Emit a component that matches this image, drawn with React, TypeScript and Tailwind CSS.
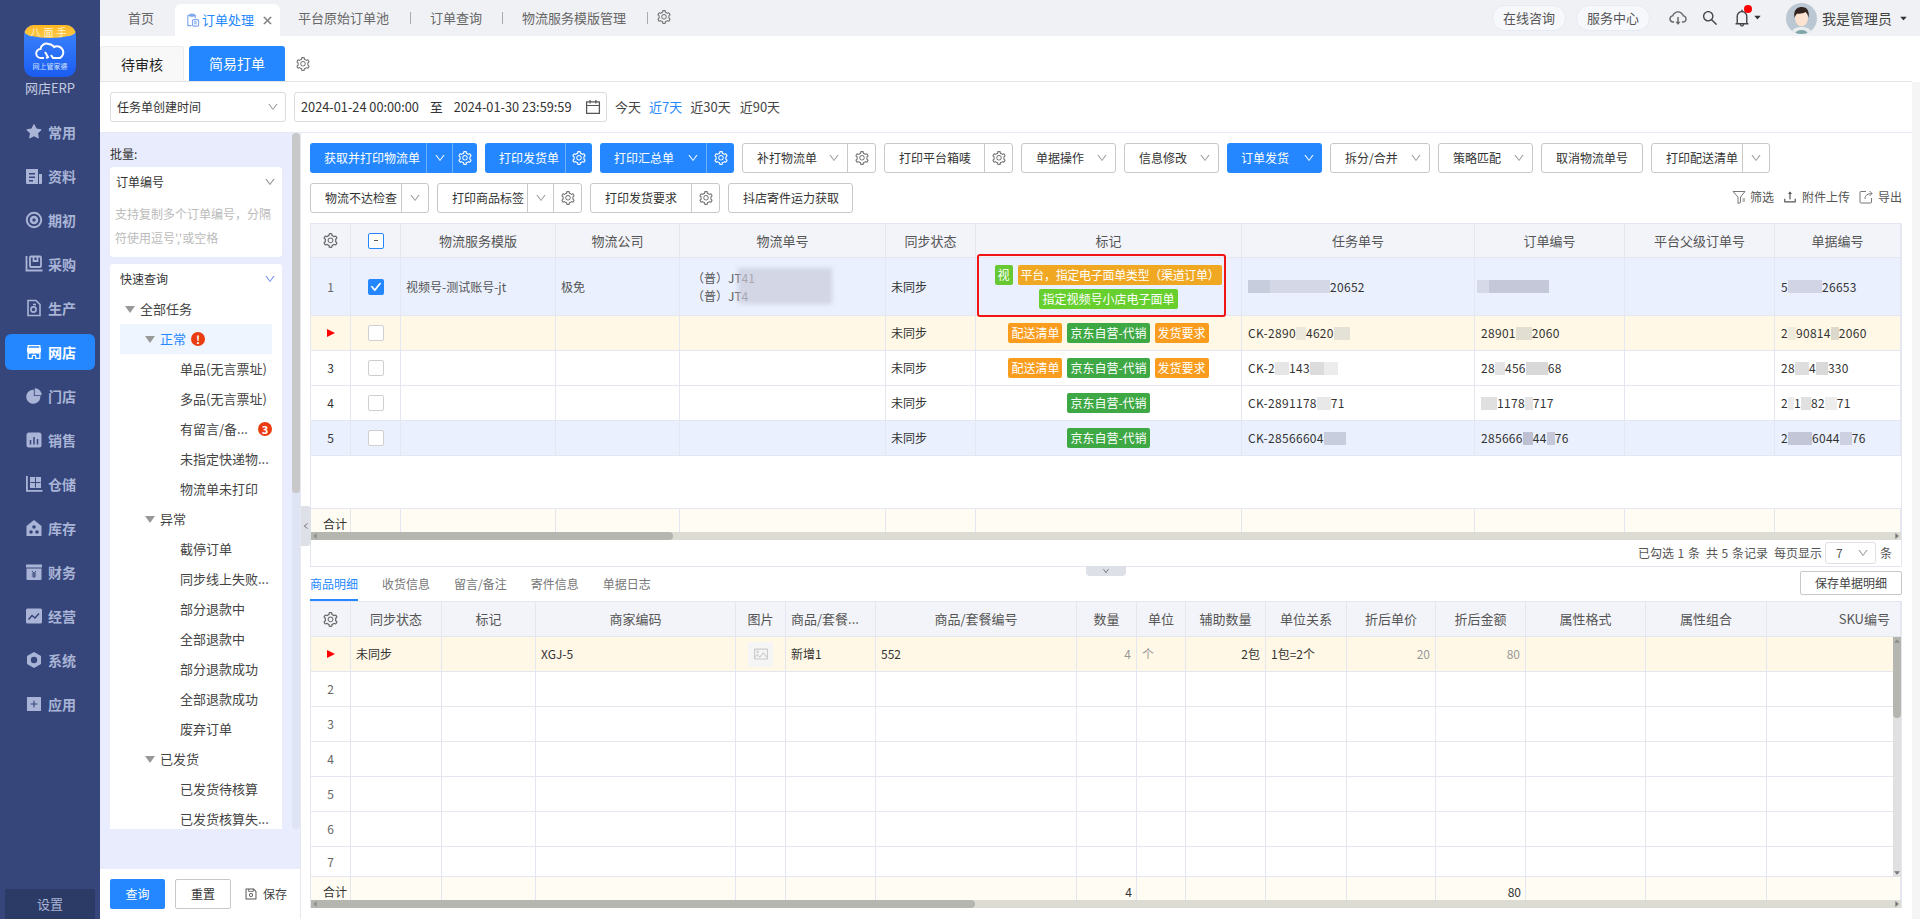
import React from "react";
import {
  AiOutlineSetting, AiOutlineDown, AiOutlineCalendar, AiOutlineUpload, AiOutlineCloudDownload,
  AiOutlineSearch, AiOutlineBell, AiOutlineClose, AiOutlinePicture, AiOutlineSave, AiFillStar,
  AiFillPieChart, AiFillShop, AiFillPlusSquare, AiOutlineCheck, AiFillCaretDown, AiOutlineLeft, AiFillCaretLeft, AiFillCaretRight, AiFillCaretUp,
} from "react-icons/ai";

const navIcon = "w-[18px] h-[18px] shrink-0";
const Doc = () => (<svg viewBox="0 0 18 18" className={navIcon} fill="currentColor"><path d="M1 2h12v15H2a1 1 0 0 1-1-1zM14 7h3v9a1 1 0 0 1-1 1h-2z" /><path d="M4 6h6v1.6H4zM4 9.5h6v1.6H4zM4 13h4v1.6H4z" fill="#36467a" /></svg>);
const Target = () => (<svg viewBox="0 0 18 18" className={navIcon} fill="none" stroke="currentColor"><circle cx="9" cy="9" r="7.2" strokeWidth="2" /><circle cx="9" cy="9" r="3" strokeWidth="2.6" /></svg>);
const Buy = () => (<svg viewBox="0 0 18 18" className={navIcon} fill="none" stroke="currentColor" strokeWidth="1.8"><path d="M1.5 1v14.5h16" /><rect x="5" y="1.5" width="11" height="10.5" rx="1" /><path d="M8.5 2v4h4V2" /></svg>);
const Prod = () => (<svg viewBox="0 0 18 18" className={navIcon} fill="none" stroke="currentColor" strokeWidth="1.6"><path d="M3 1.5h8l4 4v11H3z" /><circle cx="8.5" cy="10.5" r="2.6" /><path d="M8 5.5h3" /></svg>);
const Bars = () => (<svg viewBox="0 0 18 18" className={navIcon}><rect x="1.5" y="1.5" width="15" height="15" rx="2.5" fill="currentColor" /><path d="M5.5 9v4.5M9 6v7.5M12.5 8v5.5" stroke="#36467a" strokeWidth="1.5" /></svg>);
const Wh = () => (<svg viewBox="0 0 18 18" className={navIcon} fill="currentColor"><path d="M1 1h1.8v14H17.5v1.8H1z" /><path d="M5 2h11v11H5z" /><path d="M10 2.5h1v10h-1zM5.5 7h10v1h-10z" fill="#36467a" /></svg>);
const Stock = () => (<svg viewBox="0 0 18 18" className={navIcon} fill="currentColor"><path d="M9 1 1.5 7v10h15V7z" /><circle cx="9" cy="8" r="1.8" fill="#36467a" /><circle cx="6" cy="13" r="1.8" fill="#36467a" /><circle cx="12" cy="13" r="1.8" fill="#36467a" /></svg>);
const Money = () => (<svg viewBox="0 0 18 18" className={navIcon} fill="currentColor"><rect x="1" y="1.5" width="16" height="3" rx=".6" /><path d="M1.5 5.5h15V16a1 1 0 0 1-1 1h-13a1 1 0 0 1-1-1z" /><path d="M7 8l2 2.4L11 8M6.8 11h4.4M6.8 13h4.4M9 10.4V15" stroke="#36467a" strokeWidth="1" fill="none" /></svg>);
const Biz = () => (<svg viewBox="0 0 18 18" className={navIcon} fill="currentColor"><rect x="1" y="1.5" width="16" height="15" rx="1.5" /><path d="M3.5 12.5 7 8.5l3 2.5 4-4.5" stroke="#36467a" strokeWidth="1.5" fill="none" /></svg>);
const Hex = () => (<svg viewBox="0 0 18 18" className={navIcon}><path d="M9 1 16 5v8l-7 4-7-4V5z" fill="currentColor" /><circle cx="9" cy="9" r="3.2" fill="#36467a" /></svg>);

const navItems: [string, React.ReactNode][] = [
  ["常用", <AiFillStar className={navIcon} />], ["资料", <Doc />], ["期初", <Target />], ["采购", <Buy />], ["生产", <Prod />],
  ["网店", <AiFillShop className={navIcon} />], ["门店", <AiFillPieChart className={navIcon} />], ["销售", <Bars />], ["仓储", <Wh />], ["库存", <Stock />],
  ["财务", <Money />], ["经营", <Biz />], ["系统", <Hex />], ["应用", <AiFillPlusSquare className={navIcon} />],
];

const Logo = () => (
  <div className="relative w-[52px] h-[52px] rounded-[10px] overflow-hidden bg-gradient-to-b from-[#3f86ff] to-[#1a5cf0]">
    <div className="h-[13px] rounded-b-[50%] bg-gradient-to-b from-[#ffb81f] to-[#ffc94a] text-[10px] leading-[13px] text-center text-[#fff3cf] tracking-[3px]">八面手</div>
    <svg viewBox="0 0 30 18" className="w-[30px] h-[18px] mx-auto mt-[4px]" fill="none" stroke="#fff" strokeWidth="2"><path d="M9 16H6a4.5 4.5 0 0 1-.5-9 6 6 0 0 1 8-5 7 7 0 0 1 5.500 3 5.500 5.500 0 1 1 6 11h-7l-2-3" /><path d="M10 10l3 5-2 1" /></svg>
    <div className="text-[7px] leading-[10px] mt-[1px] text-center text-[#cfe0ff] whitespace-nowrap">网上管家婆</div>
  </div>
);

const Sidebar = () => (
  <aside className="w-[100px] shrink-0 h-full bg-[#36467a] flex flex-col">
    <div className="mt-[25px] flex justify-center"><Logo /></div>
    <div className="h-[20px] mt-[1px] text-center text-[13px] leading-[20px] text-[#c3cbe0]">网店ERP</div>
    <div className="mt-[12px] flex flex-col">
      {navItems.map(([t, ic]) => (
        <div key={t} className="h-[44px] flex items-center justify-center">
          <div className={"w-[90px] h-[36px] rounded-[6px] flex items-center pl-[20px] gap-[5px] text-[14px] font-bold " + (t === "网店" ? "bg-[#2487ff] text-white" : "text-[#a9b4d6]")}>
            {ic}<span>{t}</span>
          </div>
        </div>
      ))}
    </div>
    <div className="mt-auto mx-[5px] h-[30px] rounded-t-[3px] bg-[#2c3a66] text-[13px] leading-[30px] text-center text-[#a9b4d6]">设置</div>
  </aside>
);

const Sep = ({ ml }: { ml: string }) => <span className={"w-px h-[12px] bg-[#aaa] " + ml} />;

const TopBar = () => (
  <div className="h-[36px] shrink-0 bg-[#f0f1f5] flex items-center text-[13px] text-[#666] pr-[12px]">
    <span className="ml-[28px] w-[26px]">首页</span>
    <div className="ml-[21px] w-[105px] h-[32px] self-end rounded-t-[6px] bg-white flex items-center pl-[10px] text-[#2487ff]">
      <svg viewBox="0 0 16 16" className="w-[15px] h-[15px] shrink-0 mr-[2px]" fill="none" stroke="#7fa6ee" strokeWidth="1.2"><path d="M3 2.500h8v3M3 2.500v11h4M5.500 1.500h4v2h-4z" /><rect x="8" y="7" width="6.500" height="7" rx="1.500" /><path d="M9.500 9.500h3M9.500 11.500h3" /></svg>
      <span>订单处理</span>
      <AiOutlineClose className="ml-[8px] w-[11px] h-[11px] text-[#777]" strokeWidth={60} />
    </div>
    <span className="ml-[18px]">平台原始订单池</span>
    <Sep ml="ml-[21px]" />
    <span className="ml-[19px]">订单查询</span>
    <Sep ml="ml-[20px]" />
    <span className="ml-[19px]">物流服务模版管理</span>
    <Sep ml="ml-[21px]" />
    <AiOutlineSetting className="ml-[8px] w-[16px] h-[16px] text-[#777] -mt-[2px]" />
    <div className="ml-auto flex items-center">
      <span className="w-[74px] h-[26px] rounded-full bg-[#f7f8fc] border border-[#e8eaf4] text-center leading-[24px] text-[#555]">在线咨询</span>
      <span className="ml-[10px] w-[74px] h-[26px] rounded-full bg-[#f7f8fc] border border-[#e8eaf4] text-center leading-[24px] text-[#555]">服务中心</span>
      <AiOutlineCloudDownload className="ml-[18px] w-[20px] h-[20px] text-[#666]" />
      <AiOutlineSearch className="ml-[13px] w-[18px] h-[18px] text-[#444]" />
      <div className="relative ml-[13px] flex items-center">
        <AiOutlineBell className="w-[20px] h-[20px] text-[#444]" />
        <span className="absolute -top-[3px] left-[12px] w-[8px] h-[8px] rounded-full bg-[#ff0000]" />
        <AiFillCaretDown className="ml-[1px] w-[9px] h-[9px] text-[#333] -mt-[2px]" />
      </div>
      <svg viewBox="0 0 31 31" className="ml-[24px] w-[31px] h-[31px] rounded-full">
        <rect width="31" height="31" fill="#bcc7d4" />
        <path d="M5 31c1-6 6-7 10.500-7S25 25 26 31z" fill="#e8eef0" />
        <path d="M9 31c1-3 3-4 6.500-4S21 28 22 31z" fill="#7fa5a8" />
        <ellipse cx="15.500" cy="15" rx="6.500" ry="8.500" fill="#fbe3d0" />
        <path d="M8.500 15C7 6 12 4 16 4s8 3 6.500 11c-.5-3-1.500-5-3-6-2 1.500-6 2-8 1.500-1.500 1-2.500 2.500-3 4.500z" fill="#32241f" />
      </svg>
      <span className="ml-[5px] text-[14px] text-[#444]">我是管理员</span>
      <AiFillCaretDown className="ml-[7px] w-[9px] h-[9px] text-[#333]" />
    </div>
  </div>
);

const Tabs = () => (
  <div className="h-[46px] shrink-0 pt-[10px] flex items-stretch border-b border-[#e4e4e4] mr-[8px] text-[14px]">
    <div className="w-[84px] h-[35px] bg-[#f8f8f8] border border-b-0 border-[#ececec] rounded-t-[3px] flex items-center justify-center text-[#222]">待审核</div>
    <div className="ml-[5px] w-[96px] h-[35px] bg-[#2487ff] rounded-t-[3px] flex items-center justify-center text-white">简易打单</div>
    <AiOutlineSetting className="ml-[10px] mt-[10px] w-[16px] h-[16px] text-[#777]" />
  </div>
);

const Filter = () => (
  <div className="h-[51px] shrink-0 pl-[10px] pt-[10px] flex items-start border-b border-[#e6e8f6] text-[#333]">
    <div className="w-[176px] h-[30px] rounded-[3px] border border-[#dcdcdc] flex items-center justify-between pl-[6px] pr-[6px] text-[12px]">
      <span>任务单创建时间</span><AiOutlineDown className="w-[12px] h-[12px] text-[#999]" />
    </div>
    <div className="ml-[8px] w-[313px] h-[30px] rounded-[3px] border border-[#dcdcdc] flex items-center pl-[6px] pr-[4px] text-[12.75px] whitespace-nowrap">
      <span>2024-01-24 00:00:00</span><span className="ml-[11px]">至</span><span className="ml-[11px]">2024-01-30 23:59:59</span>
      <AiOutlineCalendar className="ml-auto w-[18px] h-[18px] text-[#555]" />
    </div>
    <div className="ml-[8px] h-[30px] flex items-center gap-[8px] text-[13px] text-[#444]">
      <span>今天</span><span className="text-[#2487ff]">近7天</span><span>近30天</span><span className="ml-[1px]">近90天</span>
    </div>
  </div>
);

const Tri = () => (
  <svg viewBox="0 0 10 7" className="w-[10px] h-[7px] shrink-0"><path d="M0 0h10L5 7z" fill="#999" /></svg>
);
const Badge = ({ children }: { children: React.ReactNode }) => (
  <span className="w-[14px] h-[14px] rounded-full bg-[#ea3c10] text-white text-[11px] leading-[14px] text-center font-bold shrink-0">{children}</span>
);

const Leaf = ({ t, badge }: { t: string; badge?: string }) => (
  <div className="h-[30px] pl-[70px] pr-[10px] flex items-center justify-between text-[13px] text-[#444] whitespace-nowrap">
    <span>{t}</span>{badge && <Badge>{badge}</Badge>}
  </div>
);
const Group = ({ t, active, badge, pad = "pl-[30px]" }: { t: string; active?: boolean; badge?: string; pad?: string }) => (
  <div className={"h-[30px] mx-[10px] flex items-center gap-[5px] text-[13px] whitespace-nowrap " + pad + (active ? " bg-[#eef5ff] text-[#2487ff]" : " text-[#444]")}>
    <Tri /><span>{t}</span>{badge && <Badge>{badge}</Badge>}
  </div>
);

const LeftPanel = () => (
  <div className="w-[200px] shrink-0 h-full flex flex-col bg-[#e8ecfc] relative">
    <div className="h-[736px] relative pl-[10px] overflow-hidden">
      <div className="absolute right-0 top-0 w-[8px] h-[696px] rounded-[4px] bg-[#dfe4f5]" />
      <div className="absolute right-0 top-0 w-[8px] h-[360px] rounded-[4px] bg-[#c8c8c8]" />
      <div className="h-[34px] pt-[11px] text-[12px] leading-[20px] text-[#333]">批量:</div>
      <div className="w-[172px] h-[90px] bg-white rounded-[3px]">
        <div className="h-[30px] pl-[6px] pr-[6px] flex items-center justify-between text-[12px] text-[#333]">
          <span>订单编号</span><AiOutlineDown className="w-[12px] h-[12px] text-[#888]" />
        </div>
        <div className="px-[5px] mt-[5px] text-[12px] leading-[24px] text-[#bbb]">支持复制多个订单编号，分隔<br />符使用逗号','或空格</div>
      </div>
      <div className="mt-[7px] w-[172px] h-[565px] bg-white rounded-t-[3px] overflow-hidden">
        <div className="h-[30px] pl-[10px] pr-[6px] flex items-center justify-between text-[12px] text-[#333]">
          <span>快速查询</span><AiOutlineDown className="w-[12px] h-[12px] text-[#6e8cf0]" />
        </div>
        <Group t="全部任务" pad="pl-[5px]" />
        <Group t="正常" active badge="!" pad="pl-[25px]" />
        <Leaf t="单品(无言票址)" />
        <Leaf t="多品(无言票址)" />
        <Leaf t="有留言/备..." badge="3" />
        <Leaf t="未指定快递物..." />
        <Leaf t="物流单未打印" />
        <Group t="异常" pad="pl-[25px]" />
        <Leaf t="截停订单" />
        <Leaf t="同步线上失败..." />
        <Leaf t="部分退款中" />
        <Leaf t="全部退款中" />
        <Leaf t="部分退款成功" />
        <Leaf t="全部退款成功" />
        <Leaf t="废弃订单" />
        <Group t="已发货" pad="pl-[25px]" />
        <Leaf t="已发货待核算" />
        <Leaf t="已发货核算失..." />
      </div>
    </div>
    <div className="h-[50px] bg-white pl-[10px] flex items-center text-[12px]">
      <div className="w-[55px] h-[30px] rounded-[2px] bg-[#2487ff] text-white flex items-center justify-center">查询</div>
      <div className="ml-[10px] w-[56px] h-[30px] rounded-[2px] border border-[#c8c8c8] text-[#333] flex items-center justify-center">重置</div>
      <AiOutlineSave className="ml-[13px] w-[14px] h-[14px] text-[#555]" />
      <span className="ml-[5px] text-[#444]">保存</span>
    </div>
  </div>
);

const Gear = ({ cls = "text-[#777]" }: { cls?: string }) => <AiOutlineSetting className={"w-[16px] h-[16px] " + cls} />;

type SegProps = { w: string; label: string; blue?: boolean; chev?: string; chevInline?: boolean; gear?: string; main?: string };
const SegBtn = ({ w, label, blue, chev, chevInline, gear, main }: SegProps) => {
  const box = blue ? "bg-[#2487ff] text-white" : "bg-white border border-[#c8c8c8] text-[#333]";
  const div = blue ? "border-l border-[#6eb0ff]" : "border-l border-[#c8c8c8]";
  const ic = blue ? "text-white" : "text-[#999]";
  return (
    <div className={"h-[30px] rounded-[3px] flex items-stretch text-[12px] whitespace-nowrap shrink-0 " + w + " " + box}>
      <div className={"flex-1 min-w-0 flex items-center pl-[14px] " + (main ?? "") + (chevInline ? " justify-between pr-[7px]" : "")}>
        <span>{label}</span>
        {chevInline && <AiOutlineDown className={"w-[12px] h-[12px] " + ic} />}
      </div>
      {chev && <div className={"flex items-center justify-center " + chev + " " + div}><AiOutlineDown className={"w-[12px] h-[12px] " + ic} /></div>}
      {gear && <div className={"flex items-center justify-center " + gear + " " + div}><Gear cls={blue ? "text-white" : "text-[#777]"} /></div>}
    </div>
  );
};

const Toolbar = () => (
  <div className="pt-[10px]">
    <div className="flex gap-[8px]">
      <SegBtn w="w-[167px]" label="获取并打印物流单" blue chev="w-[26px]" gear="w-[25px]" />
      <SegBtn w="w-[107px]" label="打印发货单" blue gear="w-[27px]" />
      <SegBtn w="w-[134px]" label="打印汇总单" blue chevInline gear="w-[28px]" />
      <SegBtn w="w-[134px]" label="补打物流单" chevInline gear="w-[28px]" />
      <SegBtn w="w-[129px]" label="打印平台箱唛" gear="w-[28px]" />
      <SegBtn w="w-[95px]" label="单据操作" chevInline />
      <SegBtn w="w-[95px]" label="信息修改" chevInline />
      <SegBtn w="w-[95px]" label="订单发货" blue chevInline />
      <SegBtn w="w-[100px]" label="拆分/合并" chevInline />
      <SegBtn w="w-[95px]" label="策略匹配" chevInline />
      <SegBtn w="w-[102px]" label="取消物流单号" />
      <SegBtn w="w-[119px]" label="打印配送清单" chev="w-[27px]" />
    </div>
    <div className="mt-[10px] flex gap-[8px] items-start relative">
      <SegBtn w="w-[119px]" label="物流不达检查" chev="w-[27px]" />
      <SegBtn w="w-[145px]" label="打印商品标签" chev="w-[26px]" gear="w-[28px]" />
      <SegBtn w="w-[130px]" label="打印发货要求" gear="w-[28px]" />
      <SegBtn w="w-[125px]" label="抖店寄件运力获取" />
      <div className="ml-auto h-[28px] flex items-center text-[12px] text-[#555] whitespace-nowrap">
        <svg viewBox="0 0 14 14" className="w-[14px] h-[14px]" fill="none" stroke="#777" strokeWidth="1"><path d="M1 1.500h12L8.500 7v5.500L6 13.500V7z" /><path d="M10.500 9h2.500M10.500 11h2.500" /></svg>
        <span className="ml-[4px]">筛选</span>
        <AiOutlineUpload className="ml-[8px] w-[16px] h-[16px] text-[#555]" />
        <span className="ml-[4px]">附件上传</span>
        <svg viewBox="0 0 14 14" className="ml-[9px] w-[14px] h-[14px]" fill="none" stroke="#777" strokeWidth="1"><path d="M7 1.500H2a1 1 0 0 0-1 1V12a1 1 0 0 0 1 1h9.500a1 1 0 0 0 1-1V8" /><path d="M6 9c0-4 3-5.500 7-5.500M10.500 1 13 3.500 10.500 6" /></svg>
        <span className="ml-[5px]">导出</span>
      </div>
    </div>
  </div>
);

const topCols = "grid grid-cols-[40px_50px_155px_124px_206px_90px_266px_233px_150px_150px_126px]";
const botCols = "grid grid-cols-[40px_91px_94px_200px_50px_90px_201px_60px_49px_80px_81px_89px_90px_120px_121px_134px]";
const cellB = "border-r border-b border-[#e4e7f0] flex items-center min-w-0 whitespace-nowrap overflow-hidden";

const Cell = ({ c = "", children }: { c?: string; children?: React.ReactNode }) => (
  <div className={cellB + " " + c}>{children}</div>
);
const Box = ({ v }: { v?: "check" | "minus" }) => {
  if (v === "check") return <span className="w-[16px] h-[16px] rounded-[2px] bg-[#2487ff] flex items-center justify-center"><AiOutlineCheck className="w-[12px] h-[12px] text-white" strokeWidth={80} /></span>;
  if (v === "minus") return <span className="w-[16px] h-[16px] rounded-[2px] border border-[#2487ff] bg-white flex items-center justify-center"><span className="w-[4px] h-px bg-[#555]" /></span>;
  return <span className="w-[16px] h-[16px] rounded-[2px] border border-[#cfcfcf] bg-white" />;
};
const Arrow = () => <svg viewBox="0 0 8 8" className="w-[8px] h-[8px]"><path d="M0 0l8 4-8 4z" fill="#f00" /></svg>;
const Tag = ({ c, children }: { c: string; children: React.ReactNode }) => (
  <span className={"h-[20px] px-[3px] rounded-[2px] text-white text-[12px] leading-[20px] whitespace-nowrap " + c}>{children}</span>
);
const M = ({ c }: { c: string }) => <i className={"inline-block h-[13px] align-middle " + c} />;

const headTop = ["物流服务模版", "物流公司", "物流单号", "同步状态", "标记", "任务单号", "订单编号", "平台父级订单号", "单据编号"];

const StdTags = () => (
  <div className="w-full flex justify-center gap-[5px]">
    <Tag c="bg-[#fa9d1e]">配送清单</Tag><Tag c="bg-[#3ea844]">京东自营-代销</Tag><Tag c="bg-[#fa9d1e]">发货要求</Tag>
  </div>
);
const JdTag = () => <div className="w-full flex justify-center"><Tag c="bg-[#3ea844]">京东自营-代销</Tag></div>;

type TopRow = { idx: React.ReactNode; bg: string; tags: React.ReactNode; task: React.ReactNode; order: React.ReactNode; doc: React.ReactNode };
const num = "pl-[6px] tracking-[0.3px] text-[#333]";
const topRows: TopRow[] = [
  {
    idx: <Arrow />, bg: "bg-[#fff8e6]", tags: <StdTags />,
    task: <>CK-2890<M c="w-[10px] bg-[#ece9dc]" />4620<M c="w-[16px] bg-[#e4e1d6]" /></>,
    order: <>28901<M c="w-[16px] bg-[#e2dfd2]" />2060</>,
    doc: <>2<M c="w-[8px] bg-[#eeebdd]" />90814<M c="w-[8px] bg-[#dcd9cc]" />2060</>,
  },
  {
    idx: "3", bg: "bg-white", tags: <StdTags />,
    task: <>CK-2<M c="w-[14px] bg-[#e6e6e6]" />143<M c="w-[14px] bg-[#dcdcdc]" /><M c="w-[14px] bg-[#ececec]" /></>,
    order: <>28<M c="w-[10px] bg-[#e4e4e4]" />456<M c="w-[22px] bg-[#d8d8d8]" />68</>,
    doc: <>28<M c="w-[14px] bg-[#dedede]" />4<M c="w-[12px] bg-[#d9d9d9]" />330</>,
  },
  {
    idx: "4", bg: "bg-white", tags: <JdTag />,
    task: <>CK-2891178<M c="w-[14px] bg-[#e8e8e8]" />71</>,
    order: <><M c="w-[16px] bg-[#e0e0e0]" />1178<M c="w-[8px] bg-[#e4e4e4]" />717</>,
    doc: <>2<M c="w-[6px] bg-[#ececec]" />1<M c="w-[10px] bg-[#e0e0e0]" />82<M c="w-[12px] bg-[#ededed]" />71</>,
  },
  {
    idx: "5", bg: "bg-[#eaf0fe]", tags: <JdTag />,
    task: <>CK-28566604<M c="w-[22px] bg-[#c8cddd]" /></>,
    order: <>285666<M c="w-[10px] bg-[#bcc0d0]" />44<M c="w-[8px] bg-[#c4c8d8]" />76</>,
    doc: <>2<M c="w-[24px] bg-[#c2c6d6]" />6044<M c="w-[12px] bg-[#ccd0e0]" />76</>,
  },
];

const TopTable = () => (
  <div className="relative mt-[10px] h-[344px] border-x border-b border-[#e4e7f0] text-[12px] text-[#333]">
    <div className={topCols + " h-[35px] bg-[#f3f4f9] text-[13px] text-[#555] border-t border-[#e4e7f0]"}>
      <Cell c="justify-center"><AiOutlineSetting className="w-[17px] h-[17px] text-[#666]" /></Cell>
      <Cell c="justify-center"><Box v="minus" /></Cell>
      {headTop.map((h) => <Cell key={h} c="justify-center">{h}</Cell>)}
    </div>
    <div className={topCols + " h-[58px] bg-[#eaf0fe]"}>
      <Cell c="justify-center text-[#666]">1</Cell>
      <Cell c="justify-center"><Box v="check" /></Cell>
      <Cell c="pl-[5px] text-[#555]">视频号-测试账号-jt</Cell>
      <Cell c="pl-[5px] text-[#555]">极免</Cell>
      <Cell c="relative pl-[12px] text-[#555]">
        <div className="leading-[18px]"><div>（普）JT41</div><div>（普）JT4</div></div>
        <span className="absolute left-[58px] top-[10px] w-[94px] h-[36px] bg-[#c9cbda]/70 blur-[2px]" />
      </Cell>
      <Cell c="pl-[5px]">未同步</Cell>
      <Cell c="flex-col justify-center gap-[4px]">
        <div className="flex gap-[5px]"><Tag c="bg-[#67c832]">视</Tag><Tag c="bg-[#f0a822] tracking-[-0.3px]">平台，指定电子面单类型（渠道订单）</Tag></div>
        <Tag c="bg-[#67cf2e]">指定视频号小店电子面单</Tag>
      </Cell>
      <Cell c={num}><M c="w-[22px] bg-[#c8cddd]" /><M c="w-[60px] bg-[#d3d7e6]" />20652</Cell>
      <Cell c="pl-[2px]"><M c="w-[12px] bg-[#d5d9e8]" /><M c="w-[60px] bg-[#c4c8d8]" /></Cell>
      <Cell />
      <Cell c={num}>5<M c="w-[34px] bg-[#d0d4e4]" />26653</Cell>
    </div>
    {topRows.map((r, i) => (
      <div key={i} className={topCols + " h-[35px] " + r.bg}>
        <Cell c="justify-center">{r.idx}</Cell>
        <Cell c="justify-center"><Box /></Cell>
        <Cell /><Cell /><Cell />
        <Cell c="pl-[5px]">未同步</Cell>
        <Cell>{r.tags}</Cell>
        <Cell c={num}>{r.task}</Cell>
        <Cell c={num}>{r.order}</Cell>
        <Cell />
        <Cell c={num}>{r.doc}</Cell>
      </div>
    ))}
    <div className="h-[53px] border-b border-[#e4e7f0]" />
    <div className={topCols + " h-[31px] bg-[#fffcf3]"}>
      <Cell c="pl-[12px] overflow-visible">合计</Cell>
      <Cell /><Cell /><Cell /><Cell /><Cell /><Cell /><Cell /><Cell /><Cell /><Cell />
    </div>
    <HScroll thumb="w-[362px]" cls="top-[309px]" />
    <div className="h-[25px] flex items-center justify-end pr-[9px] text-[12px] text-[#555] whitespace-nowrap [word-spacing:1px]">
      <span>已勾选 1 条</span><span className="ml-[6px]">共 5 条记录</span><span className="ml-[6px]">每页显示</span>
      <div className="ml-[3px] w-[51px] h-[22px] rounded-[3px] border border-[#e0e0e0] flex items-center justify-between pl-[10px] pr-[6px]"><span>7</span><AiOutlineDown className="w-[12px] h-[12px] text-[#999]" /></div>
      <span className="ml-[4px]">条</span>
    </div>
  </div>
);

const HScroll = ({ thumb, cls }: { thumb: string; cls: string }) => (
  <div className={"absolute left-0 right-0 h-[8px] bg-[#dcdcd4] flex items-center " + cls}>
    <div className={"h-[8px] rounded-r-[4px] bg-[#b6b6b0] " + thumb}><AiFillCaretLeft className="w-[8px] h-[8px] text-[#8e8e8a]" /></div>
    <AiFillCaretRight className="ml-auto w-[8px] h-[8px] text-[#777]" />
  </div>
);

const BottomTabs = () => (
  <div className="h-[34px] flex text-[12px] text-[#777] relative">
    <div className="h-[34px] w-[48px] leading-[34px] text-[#2487ff] border-b-2 border-[#2487ff] whitespace-nowrap">商品明细</div>
    <span className="ml-[24px] leading-[34px]">收货信息</span>
    <span className="ml-[24px] leading-[34px]">留言/备注</span>
    <span className="ml-[24px] leading-[34px]">寄件信息</span>
    <span className="ml-[24px] leading-[34px]">单据日志</span>
    <div className="ml-auto mt-[4px] w-[102px] h-[24px] rounded-[2px] border border-[#c8c8c8] text-[#444] flex items-center justify-center">保存单据明细</div>
  </div>
);

const headBot: [string, string][] = [
  ["同步状态", "justify-center"], ["标记", "justify-center"], ["商家编码", "justify-center"], ["图片", "justify-center"], ["商品/套餐...", "pl-[5px]"],
  ["商品/套餐编号", "justify-center"], ["数量", "justify-center"], ["单位", "justify-center"], ["辅助数量", "justify-center"], ["单位关系", "justify-center"],
  ["折后单价", "justify-center"], ["折后金额", "justify-center"], ["属性格式", "justify-center"], ["属性组合", "justify-center"], ["SKU编号", "justify-end pr-[10px]"],
];
const empty15 = Array.from({ length: 15 }, (_, i) => i);

const BottomTable = () => (
  <div className="relative h-[307px] border-x border-b border-[#e4e7f0] text-[12px] text-[#333]">
    <div className={botCols + " h-[36px] bg-[#f3f4f9] text-[13px] text-[#555] border-t border-[#e4e7f0]"}>
      <Cell c="justify-center"><AiOutlineSetting className="w-[17px] h-[17px] text-[#666]" /></Cell>
      {headBot.map(([h, c]) => <Cell key={h} c={c}>{h}</Cell>)}
    </div>
    <div className={botCols + " h-[35px] bg-[#fff8e6]"}>
      <Cell c="justify-center"><Arrow /></Cell>
      <Cell c="pl-[5px]">未同步</Cell>
      <Cell />
      <Cell c="pl-[5px]">XGJ-5</Cell>
      <Cell c="justify-center"><span className="w-[25px] h-[25px] rounded-[2px] bg-[#f5f5f5] flex items-center justify-center"><AiOutlinePicture className="w-[16px] h-[16px] text-[#ccc]" /></span></Cell>
      <Cell c="pl-[5px]">新增1</Cell>
      <Cell c="pl-[5px]">552</Cell>
      <Cell c="justify-end pr-[5px] text-[#999]">4</Cell>
      <Cell c="pl-[5px] text-[#999]">个</Cell>
      <Cell c="justify-end pr-[5px]">2包</Cell>
      <Cell c="pl-[5px]">1包=2个</Cell>
      <Cell c="justify-end pr-[5px] text-[#999]">20</Cell>
      <Cell c="justify-end pr-[5px] text-[#999]">80</Cell>
      <Cell /><Cell /><Cell />
    </div>
    {["2", "3", "4", "5", "6"].map((n) => (
      <div key={n} className={botCols + " h-[35px]"}>
        <Cell c="justify-center text-[#666]">{n}</Cell>
        {empty15.map((i) => <Cell key={i} />)}
      </div>
    ))}
    <div className={botCols + " h-[30px]"}>
      <Cell c="justify-center text-[#666]">7</Cell>
      {empty15.map((i) => <Cell key={i} />)}
    </div>
    <div className={botCols + " h-[31px] bg-[#fffcf3]"}>
      <Cell c="pl-[12px] overflow-visible">合计</Cell>
      <Cell /><Cell /><Cell /><Cell /><Cell /><Cell />
      <Cell c="justify-end pr-[4px]">4</Cell>
      <Cell /><Cell /><Cell /><Cell />
      <Cell c="justify-end pr-[4px]">80</Cell>
      <Cell /><Cell /><Cell />
    </div>
    <HScroll thumb="w-[664px]" cls="top-[299px]" />
    <div className="absolute right-0 top-[36px] w-[8px] h-[240px] bg-[#e0e0e0] flex flex-col items-center">
      <div className="w-[8px] h-[81px] bg-[#b6b6b0] rounded-b-[4px]"><AiFillCaretUp className="w-[8px] h-[8px] text-[#8e8e8a]" /></div>
      <AiFillCaretDown className="mt-auto w-[8px] h-[8px] text-[#777]" />
    </div>
  </div>
);

const Main = () => (
  <div className="relative flex-1 min-w-0 h-full bg-white border-l border-[#e6e8f0] pl-[9px] pr-[10px]">
    <Toolbar />
    <TopTable />
    <BottomTabs />
    <BottomTable />
    <div className="absolute left-0 top-[373px] w-[10px] h-[40px] rounded-r-[4px] bg-[#dde0e6] flex items-center justify-center"><AiOutlineLeft className="w-[8px] h-[8px] text-[#666]" /></div>
    <div className="absolute left-[785px] top-[433px] w-[40px] h-[10px] rounded-b-[4px] bg-[#dde0e6] flex items-center justify-center"><AiOutlineDown className="w-[8px] h-[8px] text-[#666]" /></div>
    <div className="absolute left-[676px] top-[121px] w-[249px] h-[63px] border-2 border-[#f01414] rounded-[3px]" />
  </div>
);

export default function App() {
  return (
    <div className="w-[1920px] h-[919px] overflow-hidden flex font-['Noto_Sans_CJK_SC','Noto_Sans',sans-serif] bg-white">
      <Sidebar />
      <div className="flex-1 min-w-0 flex flex-col">
        <TopBar />
        <div className="flex-1 min-h-0 relative">
          <div className="absolute right-0 top-[46px] bottom-0 w-[8px] bg-[#f5f5f5]" />
          <Tabs />
          <div className="mr-[8px]">
            <Filter />
            <div className="h-[786px] flex">
              <LeftPanel />
              <Main />
            </div>
          </div>
        </div>
      </div>
    </div>
  );
}
